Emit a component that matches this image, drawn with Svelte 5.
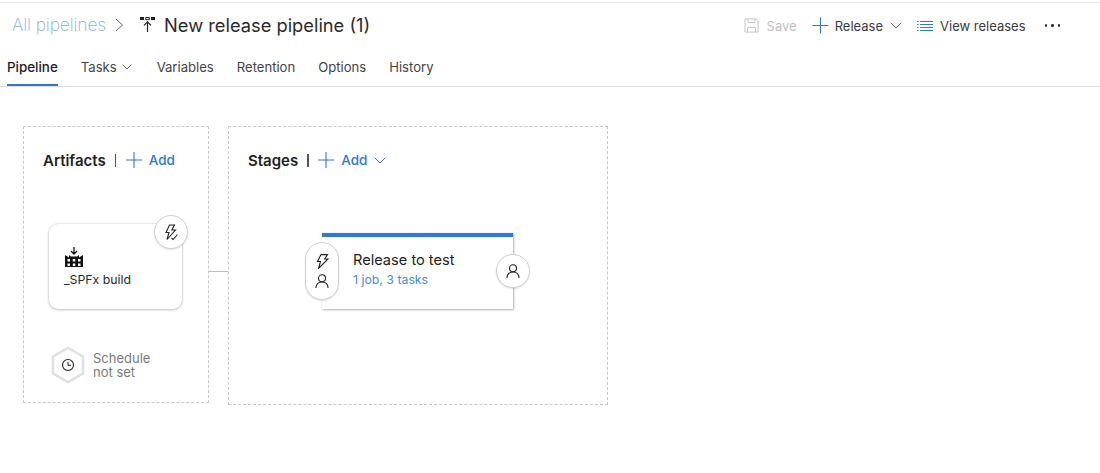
<script>
  const tabs = ['Variables', 'Retention', 'Options', 'History'];
</script>

<div class="page">
  <header class="top">
    <div class="crumbs">
      <a class="all">All pipelines</a>
      <svg class="sep" width="9" height="14" viewBox="0 0 9 14"><path d="M1 1 7.500 7 1 13" fill="none" stroke="#666" stroke-width="1"/></svg>
      <svg class="pipe" width="15" height="15" viewBox="0 0 15 15" fill="#222">
        <path d="M0 0h4v3H0zM11 0h4v3h-4z"/>
        <path d="M5.700.5h3.600v2.200H5.700z" fill="none" stroke="#222"/>
        <path d="M7.500 5v10" stroke="#222" stroke-width="1.200" fill="none"/>
        <path d="M4 8.300 7.500 4.800 11 8.300" stroke="#222" stroke-width="1.200" fill="none"/>
      </svg>
      <h1>New release pipeline (1)</h1>
    </div>
    <div class="actions">
      <span class="act save">
        <svg width="15" height="15" viewBox="0 0 15 15" fill="none" stroke="#c4c4c4"><path d="M1 .9h11l2 2v11.200H1z"/><path d="M4 1v3.500h7V1M3.500 14V9.500h8V14"/></svg>
        Save
      </span>
      <span class="act rel">
        <svg width="17" height="17" viewBox="0 0 17 17" stroke="#2f79d6" stroke-width="1.100"><path d="M8.500 .5v16M.5 8.500h16"/></svg>
        Release
        <svg class="chev" width="12" height="7" viewBox="0 0 12 7" fill="none" stroke="#666"><path d="M.7.7 6 6l5.300-5.300"/></svg>
      </span>
      <span class="act view">
        <svg width="16" height="12" viewBox="0 0 16 12" stroke="#2f79d6" stroke-width="1"><path d="M0 1.500h1.500M3 1.500h13M0 4.500h1.500M3 4.500h13M0 7.500h1.500M3 7.500h13M0 10.500h1.500M3 10.500h13"/></svg>
        View releases
      </span>
      <span class="more" aria-label="More"><i></i><i></i><i></i></span>
    </div>
  </header>

  <nav class="tabs">
    <span class="tab active">Pipeline</span>
    <span class="tab tasks">Tasks
      <svg width="10" height="6" viewBox="0 0 10 6" fill="none" stroke="#666"><path d="M.6.6 5 5 9.400.6"/></svg>
    </span>
    {#each tabs as t}
      <span class="tab">{t}</span>
    {/each}
  </nav>

  <main class="canvas">
    <section class="panel artifacts">
      <div class="phead">
        <strong>Artifacts</strong><span class="bar"></span>
        <svg width="16" height="16" viewBox="0 0 16 16" stroke="#2f79d6" stroke-width="1.100"><path d="M8 0v16M0 8h16"/></svg>
        <span class="add">Add</span>
      </div>
      <div class="artifact">
        <svg class="factory" width="18" height="20" viewBox="0 0 18 20">
          <path d="M9 0v6.500M6 4 9 7l3-3" stroke="#111" stroke-width="1.300" fill="none"/>
          <path d="M0 20V8l4 2.500V8l2 1.500h6L14 8v2.500L18 8v12z" fill="#111"/>
          <path d="M2.500 12h2.500v2.500H2.500zM7.800 12h2.500v2.500H7.800zM13 12h2.500v2.500H13zM2.500 16.500h2.500V19H2.500zM7.800 16.500h2.500V19H7.800zM13 16.500h2.500V19H13z" fill="#fff"/>
        </svg>
        <span class="aname">_SPFx build</span>
        <span class="round trig">
          <svg width="16" height="17" viewBox="0 0 16 17" fill="none" stroke="#222" stroke-width="1.100"><path d="M6.500 1h5L8.800 6h3.700L4 15.500l2-7H3z"/><path d="M8.500 14l1.500 1.500 4.500-5" /></svg>
        </span>
      </div>
      <div class="schedule">
        <svg width="34" height="38" viewBox="0 0 34 38">
          <path d="M17 2 32 10.500v17L17 36 2 27.500v-17z" fill="#fff" stroke="#e0e0e0" stroke-width="2.500"/>
          <circle cx="17" cy="19" r="5.500" fill="none" stroke="#222" stroke-width="1.100"/>
          <path d="M17 15.800V19.300h3" fill="none" stroke="#222" stroke-width="1"/>
        </svg>
        <span class="stext">Schedule<br />not set</span>
      </div>
    </section>

    <div class="link"></div>

    <section class="panel stages">
      <div class="phead">
        <strong>Stages</strong><span class="bar"></span>
        <svg width="16" height="16" viewBox="0 0 16 16" stroke="#2f79d6" stroke-width="1.100"><path d="M8 0v16M0 8h16"/></svg>
        <span class="add">Add</span>
        <svg class="addchev" width="12" height="7" viewBox="0 0 12 7" fill="none" stroke="#2f79d6"><path d="M.7.7 6 6l5.300-5.300"/></svg>
      </div>
      <div class="stage">
        <div class="stitle">Release to test</div>
        <div class="ssub">1 job, 3 tasks</div>
        <span class="pill">
          <svg width="13" height="15" viewBox="0 0 13 15" fill="none" stroke="#222" stroke-width="1.100"><path d="M5 .6h6.500L8.700 5h3.300L2.500 14.500l2-7H1.500z"/></svg>
          <svg width="14" height="14" viewBox="0 0 14 14" fill="none" stroke="#222" stroke-width="1.100"><circle cx="7" cy="4.300" r="3.500"/><path d="M.8 13.800c.5-3.600 3-5.800 6.200-5.800s5.700 2.200 6.200 5.800"/></svg>
        </span>
        <span class="round post">
          <svg width="14" height="14" viewBox="0 0 14 14" fill="none" stroke="#222" stroke-width="1.100"><circle cx="7" cy="4.300" r="3.500"/><path d="M.8 13.800c.5-3.600 3-5.800 6.200-5.800s5.700 2.200 6.200 5.800"/></svg>
        </span>
      </div>
    </section>
  </main>
</div>

<style>
  :global(body) { margin: 0; background: #fff; }
  .page {
    width: 1100px; overflow: hidden; box-sizing: border-box;
    font-family: Inter, "Liberation Sans", sans-serif; color: #333;
    border-top: 1px solid #e6e6e6; margin-top: 2px; height: 471px;
  }
  .top { display: flex; justify-content: space-between; align-items: center; height: 43px; padding: 0 40px 0 12px; }
  .crumbs { display: flex; align-items: center; }
  .all { font-size: 17.500px; font-weight: 200; color: #7fb0e8; letter-spacing: -.15px; }
  .sep { margin-left: 9px; }
  .pipe { margin-left: 16px; }
  h1 { margin: 0 0 0 9px; font-size: 18.300px; font-weight: 400; color: #2a2a2a; }
  .actions { display: flex; align-items: center; font-size: 13px; color: #3c3c3c; padding-top: 2px; }
  .act { display: inline-flex; align-items: center; }
  .save { color: #c0c0c0; gap: 8px; margin-right: 15px; }
  .rel { gap: 6px; margin-right: 15px; }
  .chev { margin-left: 1px; }
  .view { gap: 7px; margin-right: 19px; }
  .more { display: inline-flex; gap: 4px; }
  .more i { width: 2.500px; height: 2.500px; border-radius: 50%; background: #333; }

  .tabs { display: flex; height: 40px; padding-left: 7px; gap: 23px; border-bottom: 1px solid #dcdcdc; font-size: 13.100px; color: #444; box-sizing: content-box; }
  .tab { display: inline-flex; align-items: center; gap: 5px; height: 40px; box-sizing: border-box; padding-top: 2px; }
  .active { color: #222; font-weight: 500; font-size: 13.400px; border-bottom: 2px solid #2f79d6; padding-top: 4px; }
  .tasks { margin-right: 2px; }

  .canvas { display: flex; align-items: flex-start; padding: 39px 0 0 23px; }
  .panel { border: 1px dashed #c8c8c8; box-sizing: border-box; position: relative; }
  .artifacts { width: 185.500px; height: 277px; }
  .stages { width: 380px; height: 279px; }
  .link { width: 19.500px; height: 1px; background: #bdbdbd; margin-top: 145px; }

  .phead { display: flex; align-items: center; height: 18px; margin-top: 24px; font-size: 15px; color: #1f1f1f; }
  .artifacts .phead, .stages .phead { padding-left: 19px; }
  .phead strong { font-weight: 600; }
  .bar { width: 1.500px; height: 13px; background: #555; margin: 0 9.500px 0 9px; }
  .add { color: #2f79d6; font-size: 13.500px; font-weight: 500; margin-left: 7px; }
  .addchev { margin-left: 7px; }

  .artifact {
    position: relative; box-sizing: border-box; width: 133px; height: 85px;
    margin: 55px 0 0 25px; background: #fff; border-radius: 9px;
    box-shadow: 0 0 2px rgba(0,0,0,.2), 0 1px 3px rgba(0,0,0,.2);
    padding: 23px 0 0 15px; display: flex; flex-direction: column; gap: 5px; align-items: flex-start;
  }
  .factory { margin-left: 1px; }
  .aname { font-size: 12.300px; color: #2a2a2a; }
  .round {
    position: absolute; width: 34px; height: 34px; border-radius: 50%; background: #fff;
    display: flex; align-items: center; justify-content: center;
    border: 1px solid #d0d0d0; box-sizing: border-box; box-shadow: 0 1px 2px rgba(0,0,0,.12);
  }
  .trig { right: -6px; top: -9px; }

  .schedule { display: flex; align-items: center; gap: 8px; margin: 37px 0 0 27px; }
  .stext { font-size: 13px; line-height: 14px; color: #7a7a7a; }

  .stage {
    position: absolute; left: 93px; top: 106px; width: 191px; height: 76px; box-sizing: border-box;
    background: #fff; border-top: 4px solid #2f79d6;
    box-shadow: 1px 1px 2px rgba(0,0,0,.28), 0 0 1px rgba(0,0,0,.2);
    padding: 14px 0 0 31px;
  }
  .stitle { font-size: 14.600px; color: #222; line-height: 18px; }
  .ssub { font-size: 12.300px; color: #4a8ddd; line-height: 18px; margin-top: 2px; }
  .pill {
    position: absolute; left: -17px; top: 5px; width: 34px; height: 58px; box-sizing: border-box;
    border: 1px solid #d0d0d0; border-radius: 17px; background: #fff;
    display: flex; flex-direction: column; align-items: center; justify-content: center; gap: 5px;
    box-shadow: 0 1px 2px rgba(0,0,0,.12);
  }
  .post { right: -17px; top: 17px; }
</style>
